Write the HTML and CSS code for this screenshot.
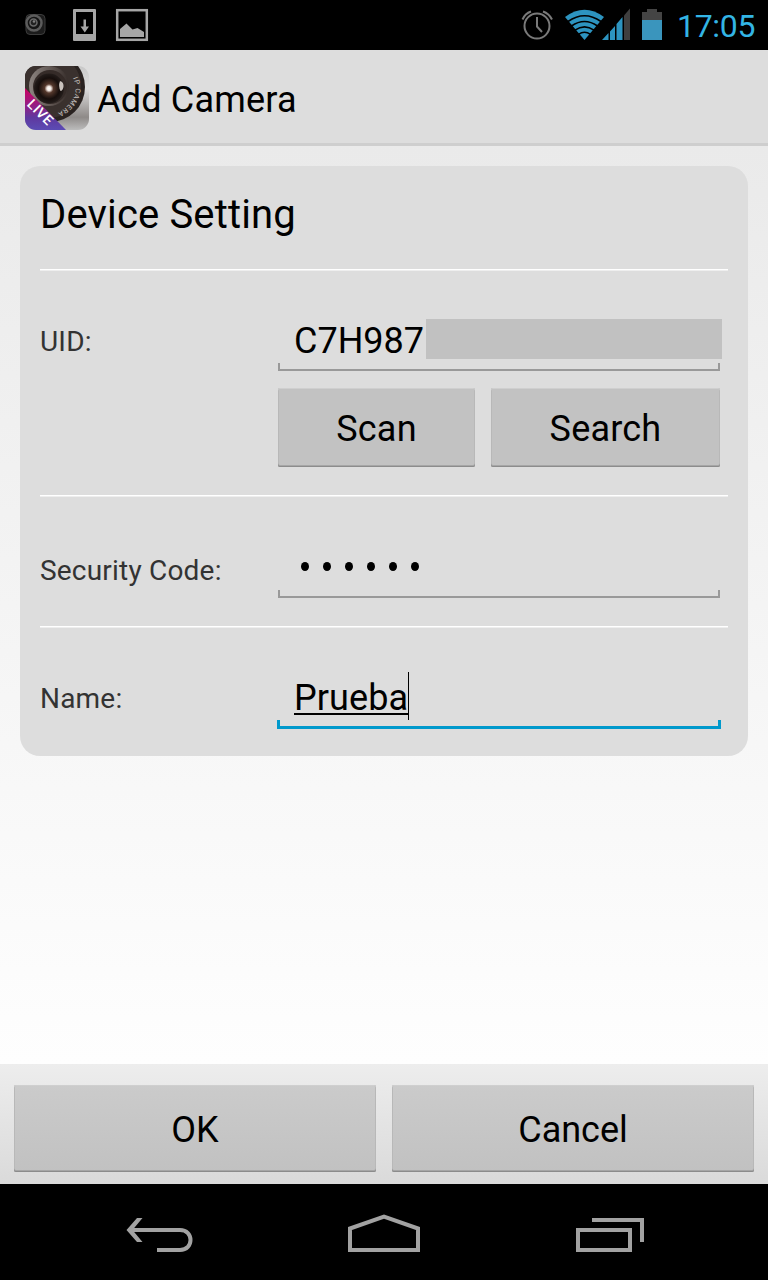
FILE: index.html
```html
<!DOCTYPE html>
<html lang="en">
<head>
    <meta charset="UTF-8">
    <meta name="viewport" content="width=device-width, initial-scale=1.0">
    <title>Add Camera</title>
    <link rel="stylesheet" href="styles.css">
</head>
<body>

    <div class="screen">

        <div class="status-bar">
            <svg class="status-icons" width="180" height="50" viewBox="0 0 180 50">
                <!-- camera app -->
                <rect x="26" y="14.500" width="19" height="20" rx="4" fill="#1c1c1c" stroke="#3c3c3c"/>
                <circle cx="34" cy="23" r="7.500" fill="#151515" stroke="#5c5c5c" stroke-width="2.500"/>
                <circle cx="33.500" cy="22.500" r="3.500" fill="#222" stroke="#6a6a6a" stroke-width="1.500"/>
                <circle cx="34" cy="21.500" r="1.300" fill="#808080"/>
                <!-- download -->
                <path fill="#a6a6a6" fill-rule="evenodd" d="M74 9h21a1 1 0 0 1 1 1v30a1 1 0 0 1-1 1H74a1 1 0 0 1-1-1V10a1 1 0 0 1 1-1zM76 12v22h17V12z"/>
                <path fill="#a6a6a6" d="M83.500 19.500h2.500v7h3l-4.200 6-4.300-6h3z"/>
                <!-- picture -->
                <rect x="117.200" y="10.200" width="29.600" height="29.600" fill="none" stroke="#a6a6a6" stroke-width="2.500"/>
                <path fill="#a6a6a6" d="M120 37v-8l6.500-5.500 6 6 5-1.500 6.500 4v5z"/>
            </svg>
            <svg class="status-icons" width="150" height="50" viewBox="515 0 150 50">
                <!-- alarm -->
                <g fill="none" stroke="#7a7a7a" stroke-width="2">
                    <circle cx="537" cy="26" r="12.500"/>
                    <path d="M537 17v9.500l5 5.500"/>
                    <path d="M522.500 19.500Q525 13.500 531 11.500M543 11.500Q549 13.500 552 19.500"/>
                </g>
                <!-- wifi -->
                <path fill="#2d94c0" d="M565 17Q584.500 2.500 604 17L584.500 40z"/>
                <g fill="none" stroke="#000" stroke-width="1.600">
                    <path d="M568 21.500Q584.500 10 601 21.500"/>
                    <path d="M571.500 26Q584.500 17 597.500 26"/>
                    <path d="M575 30.200Q584.500 23.500 594 30.200"/>
                    <path d="M578.500 34.400Q584.500 30 590.500 34.400"/>
                </g>
                <!-- signal -->
                <path fill="#3f3f3f" d="M624 15.500L630 8.500V40H624z"/>
                <path fill="#2d94c0" d="M602 40L608.500 33V40zM610 31.500L615 26V40H610zM616.500 24L622.500 17V40H616.500z"/>
                <!-- battery -->
                <path fill="#444" d="M642 12h5V9h10v3h5v9h-20z"/>
                <path fill="#3a95bd" d="M642 20h20v20h-20z"/>
            </svg>
            <span class="clock">17:05</span>
        </div>

        <div class="action-bar">
            <svg class="app-icon" width="64" height="64" viewBox="0 0 64 64">
                <defs>
                    <clipPath id="iconShape"><rect width="64" height="64" rx="11"/></clipPath>
                    <linearGradient id="metal" x1="0" y1="0" x2="0" y2="1">
                        <stop offset="0" stop-color="#c8c8c8"/>
                        <stop offset=".35" stop-color="#dedede"/>
                        <stop offset=".8" stop-color="#8e8a88"/>
                        <stop offset="1" stop-color="#bcbcbc"/>
                    </linearGradient>
                    <linearGradient id="ribbon" x1="0" y1="0" x2="0" y2="1">
                        <stop offset="0" stop-color="#cc0062"/>
                        <stop offset=".45" stop-color="#8f2287"/>
                        <stop offset=".7" stop-color="#5f389f"/>
                        <stop offset="1" stop-color="#5b4cb4"/>
                    </linearGradient>
                    <radialGradient id="lens">
                        <stop offset="0" stop-color="#fff"/>
                        <stop offset=".14" stop-color="#f0e6e0"/>
                        <stop offset=".3" stop-color="#55382c"/>
                        <stop offset=".7" stop-color="#160e0c"/>
                        <stop offset="1" stop-color="#241d1b"/>
                    </radialGradient>
                    <linearGradient id="ring" x1="0" y1="0" x2="1" y2="0">
                        <stop offset="0" stop-color="#8d8581"/>
                        <stop offset=".6" stop-color="#5c524e"/>
                        <stop offset="1" stop-color="#352c29"/>
                    </linearGradient>
                    <path id="lensText" d="M48 12Q58 34 29 49"/>
                </defs>
                <g clip-path="url(#iconShape)">
                    <rect width="64" height="64" fill="url(#metal)"/>
                    <circle cx="25" cy="21" r="35" fill="#2a2321"/>
                    <circle cx="24" cy="20" r="32" fill="#3a312e"/>
                    <circle cx="24" cy="20" r="20" fill="url(#ring)"/>
                    <circle cx="25" cy="21" r="17" fill="#352b28"/>
                    <circle cx="24" cy="22.500" r="15" fill="url(#lens)"/>
                    <path d="M35 15q4 1 3.500 6-1 4-3 4-2.500-5-.500-10z" fill="#c9c2bd"/>
                    <text class="lens-label"><textPath href="#lensText">IP CAMERA</textPath></text>
                    <path d="M0 22L41 64H0z" fill="url(#ribbon)"/>
                    <text class="live-label" transform="translate(1.200 39) rotate(45)">LIVE</text>
                </g>
            </svg>
            <h1 class="title">Add Camera</h1>
        </div>

        <div class="content">
            <div class="card">
                <h2 class="card-title">Device Setting</h2>

                <div class="row row-uid">
                    <span class="label">UID:</span>
                    <div class="controls">
                        <div class="field"><span class="uid">C7H987</span><span class="mask"></span></div>
                        <div class="field-buttons">
                            <button class="btn btn-scan">Scan</button>
                            <button class="btn btn-search">Search</button>
                        </div>
                    </div>
                </div>

                <div class="row row-code">
                    <span class="label">Security Code:</span>
                    <div class="controls">
                        <div class="field dots">
                            <i></i><i></i><i></i><i></i><i></i><i></i>
                        </div>
                    </div>
                </div>

                <div class="row row-name">
                    <span class="label">Name:</span>
                    <div class="controls">
                        <div class="field active"><span class="typed">Prueba</span><span class="cursor"></span></div>
                    </div>
                </div>
            </div>
        </div>

        <div class="footer">
            <button class="btn">OK</button>
            <button class="btn">Cancel</button>
        </div>

        <div class="nav-bar">
            <svg width="768" height="96" viewBox="0 1184 768 96" fill="none" stroke="#a2a2a2" stroke-width="4">
                <path d="M130 1230H180C194 1230 194 1250 180 1250H157"/>
                <path fill="#a2a2a2" stroke="none" d="M137 1218h5.500l-10 12 10 12H137l-10.500-12z"/>
                <path d="M350 1250V1228.500L384 1216.500L418 1228.500V1250z"/>
                <path d="M578 1230H630V1250H578zM592 1220H642V1242"/>
            </svg>
        </div>

    </div>

</body>
</html>
```
FILE: styles.css
```css
*,*::before,*::after {
    box-sizing: border-box;
    margin: 0;
    padding: 0;
    font-family: Roboto, sans-serif;
}

body {
    background-color: #000;
    color: #000;
}

.screen {
    width: 768px;
    height: 1280px;
    display: flex;
    flex-direction: column;
    overflow: hidden;
}

/* status bar */
.status-bar {
    height: 50px;
    flex: none;
    display: flex;
    align-items: center;
    background-color: #000;
}

.status-icons + .status-icons {
    margin-left: 335px;
}

.clock {
    margin-left: 12px;
    padding-top: 1px;
    color: #33b5e5;
    font-size: 32px;
    line-height: 50px;
    letter-spacing: -0.3px;
    white-space: nowrap;
}

/* title */
.action-bar {
    height: 96px;
    flex: none;
    display: flex;
    align-items: center;
    padding-left: 25px;
    background-color: #ddd;
    border-bottom: 3px solid #cecece;
}

.app-icon {
    margin-top: 3px;
}

.title {
    margin-left: 8px;
    padding-top: 6px;
    font-size: 36px;
    font-weight: 400;
    letter-spacing: 0.2px;
    white-space: nowrap;
}

.lens-label {
    fill: #c9c4c0;
    font-size: 7px;
    letter-spacing: 0.8px;
}

.live-label {
    fill: #fff;
    font-size: 14px;
    font-weight: 500;
    letter-spacing: 0.5px;
}

/* form */
.content {
    height: 918px;
    flex: none;
    padding: 20px;
    background: linear-gradient(#eaeaea, #fefefe);
}

.card {
    height: 590px;
    padding: 0 20px;
    background-color: #ddd;
    border-radius: 20px;
}

.card-title {
    height: 103px;
    line-height: 98px;
    font-size: 40px;
    font-weight: 400;
    letter-spacing: 0.15px;
    white-space: nowrap;
}

.row {
    display: flex;
    border-top: 1px solid #fff;
    box-shadow: inset 0 1px #eee;
}

.row-uid {
    height: 226px;
    padding-top: 43px;
}

.row-code {
    height: 131px;
    padding-top: 46px;
}

.row-name {
    height: 130px;
    padding-top: 44px;
}

.label {
    width: 238px;
    line-height: 58px;
    font-size: 28px;
    letter-spacing: 0.2px;
    color: #333;
    white-space: nowrap;
}

.row-name .label {
    line-height: 56px;
}

.controls {
    width: 442px;
}

.field {
    position: relative;
    height: 58px;
    padding-left: 16px;
    display: flex;
    font-size: 36px;
    line-height: 57px;
    border-bottom: 2px solid #999;
}

/* little ticks at both ends of the underline */
.field::after {
    content: "";
    position: absolute;
    left: 0;
    right: 0;
    bottom: 0;
    height: 6px;
    border: solid #999;
    border-width: 0 2px;
}

.field.active {
    margin: 0 -1px;
    padding-left: 17px;
    line-height: 55px;
    border-bottom: 3px solid #09c;
}

.field.active::after {
    border-color: #09c;
    border-width: 0 3px;
}

.mask {
    flex: none;
    width: 296px;
    height: 40px;
    margin: 6px -2px 0 auto;
    background-color: #c1c1c1;
}

.field.dots {
    height: 56px;
    gap: 14px;
    padding: 20px 0 0 23px;
}

.dots i {
    width: 8px;
    height: 9px;
    border-radius: 50%;
    background-color: #000;
}

.typed {
    height: 44px;
    border-bottom: 2px solid #000;
    letter-spacing: 0.1px;
}

.cursor {
    width: 1px;
    height: 48px;
    margin-top: 1px;
    background-color: #000;
}

.field-buttons {
    display: flex;
    gap: 16px;
    margin-top: 17px;
}

.btn {
    border: none;
    border-radius: 2px;
    padding-top: 2px;
    background-color: #c2c2c2;
    box-shadow: inset 0 1px #cfcfcf, inset 0 -1px #8c8c8c, inset 0 -2px #a6a6a6, inset 1px 0 #b8b8b8, inset -1px 0 #b8b8b8;
    color: #000;
    font-size: 36px;
    letter-spacing: 0.2px;
}

.field-buttons .btn {
    height: 79px;
}

.btn-scan {
    width: 197px;
}

.btn-search {
    width: 229px;
}

/* ok / cancel */
.footer {
    height: 120px;
    flex: none;
    display: flex;
    gap: 16px;
    padding: 21px 14px 12px;
    background: linear-gradient(#ededed, #dadada);
}

.footer .btn {
    flex: 1;
    background: linear-gradient(#cbcbcb, #c1c1c1);
    letter-spacing: 0;
}

/* navigation */
.nav-bar {
    height: 96px;
    flex: none;
    background-color: #000;
}
```
